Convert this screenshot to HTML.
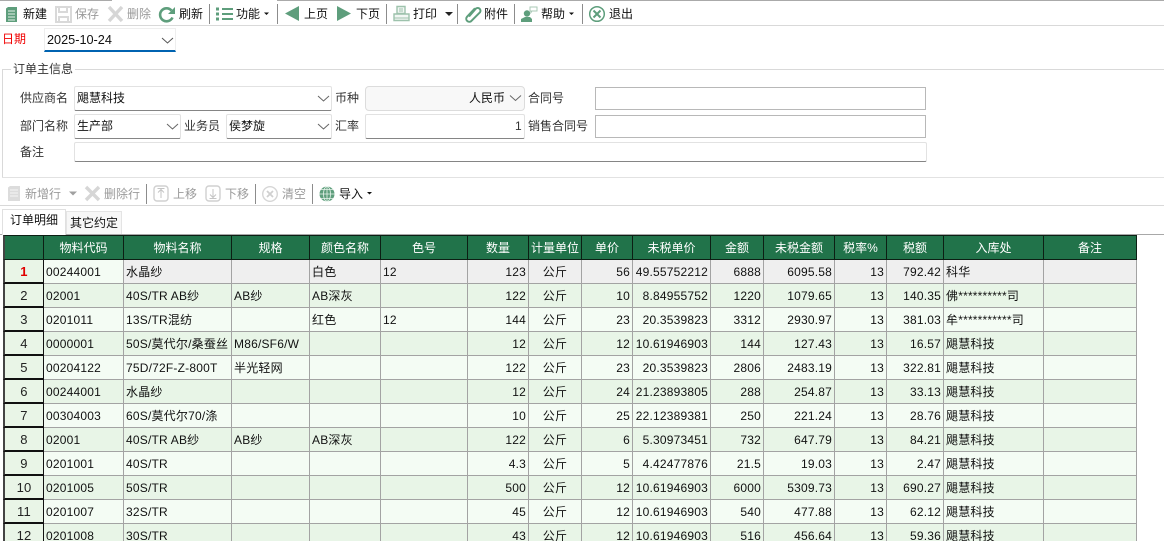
<!DOCTYPE html>
<html lang="zh">
<head>
<meta charset="utf-8">
<title>订单</title>
<style>
html,body{margin:0;padding:0;background:#fff;width:1164px;height:541px;overflow:hidden}
body{font:12px/16px "Liberation Sans","Noto Sans CJK SC",sans-serif;color:#222}
#w{position:relative;width:1164px;height:541px;overflow:hidden}
.t{position:absolute;white-space:nowrap;line-height:16px;font-size:12px;color:#111}
.g{color:#9a9a9a}
.l{color:#333}
.ln{position:absolute;background:#d9d9d9}
.sep{position:absolute;width:1px;background:#8c8c8c}
.box{position:absolute;box-sizing:border-box;border:1px solid #e2e2e2;border-bottom:1px solid #858585;border-radius:2px;background:#fff}
.inp{position:absolute;box-sizing:border-box;border:1px solid #b8b8b8;background:#fff}
svg.ov{position:absolute;left:0;top:0;z-index:2}
table{position:absolute;left:3px;top:235px;border-collapse:separate;border-spacing:0;table-layout:fixed;width:1134px}
td,th{box-sizing:border-box;height:24px;padding:0 2px;overflow:hidden;white-space:nowrap;font-size:12px;line-height:22px;border-right:1px solid #a3a3a3;border-bottom:1px solid #a3a3a3;font-weight:normal;color:#111;text-align:left}
td{letter-spacing:.2px}
th{background:#21734a;color:#fff;text-align:center;border-right:1px solid #0c1f14;border-top:1px solid #0c1f14;border-bottom:1px solid #0c1f14;height:25px;padding:0;line-height:22px}
td.n{text-align:center;background:#e9f5e7;border-right:1px solid #111;border-bottom:2px solid #111;border-left:2px solid #444;padding:1px 0 0;color:#222;font-size:13px;line-height:21px}
th.n{border-left:2px solid #444}
td.r{text-align:right}
td.c{text-align:center}
tr.a td{background:#e8f5e7}
tr.b td{background:#f4fcf4}
tr.s td{background:#efefef}
tr.a td.n,tr.b td.n,tr.s td.n{background:#e9f5e7}
tr.s td.cur{background:#f4fcf4}
tr.s td.n{color:#e00000;font-weight:bold}
</style>
</head>
<body>
<div id="w">
<!-- top lines -->
<div class="ln" style="left:0;top:0;width:112px;height:1px;background:#aaa"></div>
<div class="ln" style="left:277px;top:0;width:887px;height:1px;background:#aaa"></div>
<div class="ln" style="left:0;top:25px;width:1164px;height:1px"></div>

<svg class="ov" width="1164" height="541" viewBox="0 0 1164 541" fill="none">
  <!-- 新建 -->
  <path d="M6 8.500 8 7h9v15H6z" fill="#5e9e7c"/>
  <path d="M8 11h7M8 14h7M8 17h7M8 20h7" stroke="#e6f2ea" stroke-width="1"/>
  <!-- 保存 -->
  <path d="M56 7h15v15H56z" stroke="#d9d9d9" stroke-width="2"/>
  <path d="M59 7v5h8V7M59 22v-5h9v5" stroke="#d9d9d9" stroke-width="2"/>
  <!-- 删除 -->
  <path d="M109 7l13 14M122 7l-13 14" stroke="#d6d6d6" stroke-width="3.400"/>
  <!-- 刷新 -->
  <path d="M172.500 17.500a6.500 6.500 0 1 1-1-7" stroke="#5e9e7c" stroke-width="2.600"/>
  <path d="M175 7v7h-7z" fill="#5e9e7c"/>
  <!-- 功能 -->
  <path d="M222 9h11M222 14h11M222 19h11" stroke="#5e9e7c" stroke-width="2"/>
  <path d="M216 9h3M216 14h3M216 19h3" stroke="#5e9e7c" stroke-width="3"/>
  <path d="M264 12.500h5l-2.500 2.500z" fill="#111"/>
  <!-- 上页 下页 -->
  <path d="M299 6v15l-14-7.500z" fill="#5e9e7c"/>
  <path d="M337 6v15l14-7.500z" fill="#5e9e7c"/>
  <!-- 打印 -->
  <path d="M397 6.500h8v7h-8zM394 14h15v6.500h-15z" stroke="#9dc2ac" stroke-width="1.400" fill="#f2f7f4"/>
  <path d="M394 18h15" stroke="#9dc2ac"/>
  <path d="M399 9h4M399 11h4" stroke="#9dc2ac"/>
  <path d="M445 12h8l-4 4z" fill="#222"/>
  <!-- 附件 -->
  <path d="M469 16.500l7-8a2.800 2.800 0 0 1 4 3.800l-8.500 8.500a3 3 0 0 1-4.500-4l8-8.500" stroke="#5e9e7c" stroke-width="2"/>
  <!-- 帮助 -->
  <path d="M521 22v-3l4-2h5l2 2v3z" fill="#5e9e7c"/>
  <circle cx="527" cy="13.500" r="3.200" fill="#5e9e7c"/>
  <path d="M530 7h7v4h-5l-1 1.500V11h-1z" stroke="#a9c9b6" fill="#fff"/>
  <path d="M569 12.500h5l-2.500 2.500z" fill="#111"/>
  <!-- 退出 -->
  <circle cx="597" cy="14" r="7.300" stroke="#5e9e7c" stroke-width="1.500"/>
  <path d="M593.500 10.500l7 7M600.500 10.500l-7 7" stroke="#5e9e7c" stroke-width="2"/>
  <!-- 日期 chevron -->
  <path d="M162 38l5.500 5 5.500-5" stroke="#555"/>
  <!-- form chevrons -->
  <path d="M318 96l5.500 5 5.500-5M510 95.500l5.500 5 5.500-5M167 124l5.500 5 5.500-5M318 124l5.500 5 5.500-5" stroke="#666"/>
  <!-- toolbar2 -->
  <path d="M8 187.500 10 186h10v15H8z" fill="#dcdcdc"/>
  <path d="M10 190h8M10 193h8M10 196h8" stroke="#f6f6f6"/>
  <path d="M69 191.500h8l-4 4z" fill="#a0a0a0"/>
  <path d="M86 187l13 13M99 187l-13 13" stroke="#d6d6d6" stroke-width="3.400"/>
  <rect x="154" y="186" width="14" height="15" rx="3" stroke="#d0d0d0" stroke-width="1.400"/>
  <path d="M161 198v-8M158 192.500l3-3 3 3M157.500 188.500h7" stroke="#c4c4c4"/>
  <rect x="206" y="186" width="14" height="15" rx="3" stroke="#d0d0d0" stroke-width="1.400"/>
  <path d="M213 189v8M210 194.500l3 3 3-3M209.500 198.500h7" stroke="#c4c4c4"/>
  <circle cx="270" cy="194" r="7.300" stroke="#d6d6d6" stroke-width="1.400"/>
  <path d="M267 191l6 6M273 191l-6 6" stroke="#d0d0d0" stroke-width="1.800"/>
  <circle cx="327" cy="194" r="7.500" fill="#5e9e7c"/>
  <path d="M319.500 194h15M327 186.500v15M321 189.500h12M321 198.500h12" stroke="#e8f3ec" stroke-width=".8"/>
  <ellipse cx="327" cy="194" rx="3.500" ry="7.500" stroke="#e8f3ec" stroke-width=".8"/>
  <path d="M367 192h5l-2.500 2.500z" fill="#111"/>
</svg>

<!-- toolbar 1 -->
<span class="t" style="left:23px;top:6px">新建</span>
<span class="t g" style="left:75px;top:6px">保存</span>
<span class="t g" style="left:127px;top:6px">删除</span>
<span class="t" style="left:179px;top:6px">刷新</span>
<div class="sep" style="left:209px;top:4px;height:20px"></div>
<span class="t" style="left:236px;top:6px">功能</span>
<div class="sep" style="left:277px;top:4px;height:20px"></div>
<span class="t" style="left:304px;top:6px">上页</span>
<span class="t" style="left:356px;top:6px">下页</span>
<div class="sep" style="left:386px;top:4px;height:20px"></div>
<span class="t" style="left:413px;top:6px">打印</span>
<div class="sep" style="left:457px;top:4px;height:20px"></div>
<span class="t" style="left:484px;top:6px">附件</span>
<div class="sep" style="left:514px;top:4px;height:20px"></div>
<span class="t" style="left:541px;top:6px">帮助</span>
<div class="sep" style="left:582px;top:4px;height:20px"></div>
<span class="t" style="left:609px;top:6px">退出</span>

<!-- date -->
<span class="t" style="left:2px;top:31px;color:#f00000">日期</span>
<div style="position:absolute;left:44px;top:28px;width:132px;height:24px;box-sizing:border-box;border:1px solid #eee;border-bottom:2px solid #0063b1"></div>
<span class="t" style="left:47px;top:32px;font-size:12.700px;z-index:1">2025-10-24</span>

<!-- group -->
<div class="ln" style="left:2px;top:69px;width:1162px;height:1px"></div>
<div class="ln" style="left:2px;top:69px;width:1px;height:108px"></div>
<div class="ln" style="left:2px;top:177px;width:1162px;height:1px;background:#e2e2e2"></div>
<span class="t l" style="left:11px;top:61px;background:#fff;padding:0 2px">订单主信息</span>

<span class="t l" style="left:20px;top:90px">供应商名</span>
<div class="box" style="left:74px;top:86px;width:258px;height:25px"></div>
<span class="t" style="left:77px;top:90px">飓慧科技</span>
<span class="t l" style="left:335px;top:90px">币种</span>
<div class="box" style="left:365px;top:86px;width:160px;height:25px;background:#f8f8f8;border-bottom-color:#d0d0d0;border-color:#dcdcdc;border-radius:4px"></div>
<span class="t" style="left:469px;top:90px">人民币</span>
<span class="t l" style="left:528px;top:90px">合同号</span>
<div class="inp" style="left:595px;top:87px;width:331px;height:23px"></div>

<span class="t l" style="left:20px;top:118px">部门名称</span>
<div class="box" style="left:74px;top:114px;width:107px;height:25px"></div>
<span class="t" style="left:77px;top:118px">生产部</span>
<span class="t l" style="left:184px;top:118px">业务员</span>
<div class="box" style="left:226px;top:114px;width:106px;height:25px"></div>
<span class="t" style="left:229px;top:118px">侯梦旋</span>
<span class="t l" style="left:335px;top:118px">汇率</span>
<div class="box" style="left:365px;top:114px;width:160px;height:25px"></div>
<span class="t l" style="left:515px;top:118px">1</span>
<span class="t l" style="left:528px;top:118px">销售合同号</span>
<div class="inp" style="left:595px;top:115px;width:331px;height:23px"></div>

<span class="t l" style="left:20px;top:144px">备注</span>
<div class="box" style="left:74px;top:142px;width:853px;height:20px"></div>

<!-- toolbar 2 -->
<span class="t g" style="left:25px;top:186px">新增行</span>
<span class="t g" style="left:104px;top:186px">删除行</span>
<div class="sep" style="left:146px;top:184px;height:20px"></div>
<span class="t g" style="left:173px;top:186px">上移</span>
<span class="t g" style="left:225px;top:186px">下移</span>
<div class="sep" style="left:255px;top:184px;height:20px"></div>
<span class="t g" style="left:282px;top:186px">清空</span>
<div class="sep" style="left:312px;top:184px;height:20px"></div>
<span class="t" style="left:339px;top:186px">导入</span>
<div class="ln" style="left:0;top:205px;width:1164px;height:1px"></div>

<!-- tabs -->
<div class="ln" style="left:0;top:234px;width:1164px;height:1px;background:#a8a8a8"></div>
<div style="position:absolute;left:66px;top:211px;width:56px;height:23px;box-sizing:border-box;background:#f7f7f7;border:1px solid #e4e4e4;border-bottom:0"></div>
<div style="position:absolute;left:2px;top:209px;width:64px;height:26px;box-sizing:border-box;background:#fff;border:1px solid #e0e0e0;border-bottom:0"></div>
<span class="t" style="left:10px;top:212px">订单明细</span>
<span class="t" style="left:70px;top:215px">其它约定</span>

<table>
<colgroup>
<col style="width:41px"><col style="width:80px"><col style="width:108px"><col style="width:78px"><col style="width:71px"><col style="width:87px"><col style="width:61px"><col style="width:53px"><col style="width:51px"><col style="width:78px"><col style="width:53px"><col style="width:71px"><col style="width:52px"><col style="width:57px"><col style="width:100px"><col style="width:93px">
</colgroup>
<tr><th class="n"></th><th>物料代码</th><th>物料名称</th><th>规格</th><th>颜色名称</th><th>色号</th><th>数量</th><th>计量单位</th><th>单价</th><th>未税单价</th><th>金额</th><th>未税金额</th><th>税率%</th><th>税额</th><th>入库处</th><th>备注</th></tr>
<tr class="s"><td class="n">1</td><td class="cur">00244001</td><td>水晶纱</td><td></td><td>白色</td><td>12</td><td class="r">123</td><td class="c">公斤</td><td class="r">56</td><td class="r">49.55752212</td><td class="r">6888</td><td class="r">6095.58</td><td class="r">13</td><td class="r">792.42</td><td>科华</td><td></td></tr>
<tr class="a"><td class="n">2</td><td>02001</td><td>40S/TR AB纱</td><td>AB纱</td><td>AB深灰</td><td></td><td class="r">122</td><td class="c">公斤</td><td class="r">10</td><td class="r">8.84955752</td><td class="r">1220</td><td class="r">1079.65</td><td class="r">13</td><td class="r">140.35</td><td>佛**********司</td><td></td></tr>
<tr class="b"><td class="n">3</td><td>0201011</td><td>13S/TR混纺</td><td></td><td>红色</td><td>12</td><td class="r">144</td><td class="c">公斤</td><td class="r">23</td><td class="r">20.3539823</td><td class="r">3312</td><td class="r">2930.97</td><td class="r">13</td><td class="r">381.03</td><td>牟***********司</td><td></td></tr>
<tr class="a"><td class="n">4</td><td>0000001</td><td>50S/莫代尔/桑蚕丝</td><td>M86/SF6/W</td><td></td><td></td><td class="r">12</td><td class="c">公斤</td><td class="r">12</td><td class="r">10.61946903</td><td class="r">144</td><td class="r">127.43</td><td class="r">13</td><td class="r">16.57</td><td>飓慧科技</td><td></td></tr>
<tr class="b"><td class="n">5</td><td>00204122</td><td>75D/72F-Z-800T</td><td>半光轻网</td><td></td><td></td><td class="r">122</td><td class="c">公斤</td><td class="r">23</td><td class="r">20.3539823</td><td class="r">2806</td><td class="r">2483.19</td><td class="r">13</td><td class="r">322.81</td><td>飓慧科技</td><td></td></tr>
<tr class="a"><td class="n">6</td><td>00244001</td><td>水晶纱</td><td></td><td></td><td></td><td class="r">12</td><td class="c">公斤</td><td class="r">24</td><td class="r">21.23893805</td><td class="r">288</td><td class="r">254.87</td><td class="r">13</td><td class="r">33.13</td><td>飓慧科技</td><td></td></tr>
<tr class="b"><td class="n">7</td><td>00304003</td><td>60S/莫代尔70/涤</td><td></td><td></td><td></td><td class="r">10</td><td class="c">公斤</td><td class="r">25</td><td class="r">22.12389381</td><td class="r">250</td><td class="r">221.24</td><td class="r">13</td><td class="r">28.76</td><td>飓慧科技</td><td></td></tr>
<tr class="a"><td class="n">8</td><td>02001</td><td>40S/TR AB纱</td><td>AB纱</td><td>AB深灰</td><td></td><td class="r">122</td><td class="c">公斤</td><td class="r">6</td><td class="r">5.30973451</td><td class="r">732</td><td class="r">647.79</td><td class="r">13</td><td class="r">84.21</td><td>飓慧科技</td><td></td></tr>
<tr class="b"><td class="n">9</td><td>0201001</td><td>40S/TR</td><td></td><td></td><td></td><td class="r">4.3</td><td class="c">公斤</td><td class="r">5</td><td class="r">4.42477876</td><td class="r">21.5</td><td class="r">19.03</td><td class="r">13</td><td class="r">2.47</td><td>飓慧科技</td><td></td></tr>
<tr class="a"><td class="n">10</td><td>0201005</td><td>50S/TR</td><td></td><td></td><td></td><td class="r">500</td><td class="c">公斤</td><td class="r">12</td><td class="r">10.61946903</td><td class="r">6000</td><td class="r">5309.73</td><td class="r">13</td><td class="r">690.27</td><td>飓慧科技</td><td></td></tr>
<tr class="b"><td class="n">11</td><td>0201007</td><td>32S/TR</td><td></td><td></td><td></td><td class="r">45</td><td class="c">公斤</td><td class="r">12</td><td class="r">10.61946903</td><td class="r">540</td><td class="r">477.88</td><td class="r">13</td><td class="r">62.12</td><td>飓慧科技</td><td></td></tr>
<tr class="a"><td class="n">12</td><td>0201008</td><td>30S/TR</td><td></td><td></td><td></td><td class="r">43</td><td class="c">公斤</td><td class="r">12</td><td class="r">10.61946903</td><td class="r">516</td><td class="r">456.64</td><td class="r">13</td><td class="r">59.36</td><td>飓慧科技</td><td></td></tr>
</table>
</div>
</body>
</html>
